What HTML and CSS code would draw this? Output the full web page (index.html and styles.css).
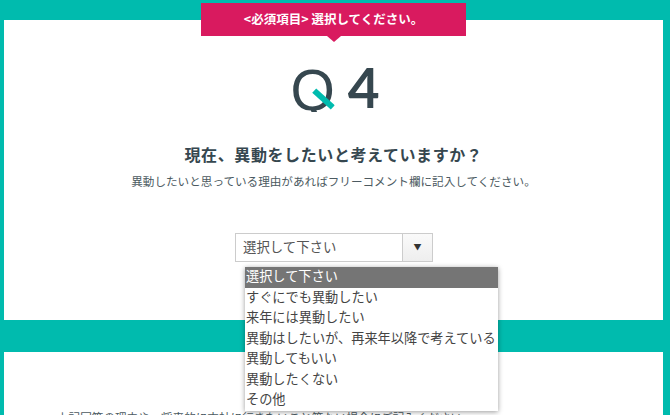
FILE: index.html
```html
<!DOCTYPE html>
<html lang="ja">
<head>
  <meta charset="UTF-8" />
  <meta name="viewport" content="width=device-width, initial-scale=1.0" />
  <title>Q4</title>
  <link rel="stylesheet" href="styles.css">
</head>
<body>
  <!-- Question card -->
  <section class="card question">
    <div class="notice">&lt;必須項目&gt; 選択してください。</div>

    <div class="number">
      <span class="number-q">Q<span class="number-tail"></span></span>
      <span class="number-n">4</span>
    </div>

    <h2 class="title">現在、異動をしたいと考えていますか？</h2>
    <p class="lead">異動したいと思っている理由があればフリーコメント欄に記入してください。</p>

    <!-- Select box with its open list -->
    <div class="select">
      <div class="select-box">
        <span class="select-value">選択して下さい</span>
        <span class="select-arrow">▼</span>
      </div>
      <ul class="select-list">
        <li class="selected">選択して下さい</li>
        <li>すぐにでも異動したい</li>
        <li>来年には異動したい</li>
        <li>異動はしたいが、再来年以降で考えている</li>
        <li>異動してもいい</li>
        <li>異動したくない</li>
        <li>その他</li>
      </ul>
    </div>
  </section>

  <!-- Free comment card -->
  <section class="card comment">
    <p class="comment-text">上記回答の理由や、将来的に本社に行きたいこと等ない場合にご記入ください</p>
  </section>
</body>
</html>
```

FILE: styles.css
```css
* {
  margin: 0;
  padding: 0;
  box-sizing: border-box;
}
body {
  font-family: "Noto Sans CJK JP", "Noto Sans", sans-serif;
  background-color: #00bbae;
  color: #36474f;
  height: 415px;
  padding: 20px 7px 0 4px;
  overflow: hidden;
}
.card {
  background-color: #fff;
  position: relative;
}
.question {
  height: 300px;
  padding-top: 41px;
  text-align: center;
}
/* Pink banner sticking out of the top of the card */
.notice {
  position: absolute;
  top: -17px;
  left: 197px;
  width: 265px;
  height: 33px;
  line-height: 32px;
  background-color: #d91a5f;
  color: #fff;
  font-size: 12.5px;
  font-weight: 700;
}
.notice::after {
  content: "";
  position: absolute;
  top: 33px;
  left: 126px;
  border-top: 6px solid #d91a5f;
  border-left: 7px solid transparent;
  border-right: 7px solid transparent;
}
/* Q4 mark */
.number {
  display: flex;
  justify-content: center;
  gap: 13px;
  height: 58px;
  padding-left: 3px;
  font-family: "Liberation Sans", sans-serif;
  font-size: 57px;
  line-height: 58px;
}
.number-q {
  position: relative;
  clip-path: inset(0 0 7px 0); /* cut the glyph's own tail, the teal bar replaces it */
}
.number-n {
  font-family: "Lato", sans-serif;
  font-weight: 700;
  font-size: 55px;
  line-height: 53px;
}
.number-tail {
  position: absolute;
  left: 21px;
  top: 35px;
  width: 25px;
  height: 6px;
  background-color: #00bbae;
  transform: rotate(42deg);
}
.title {
  margin-top: 23px;
  font-size: 16px;
  font-weight: 700;
  letter-spacing: 0.6px;
  line-height: 24px;
}
.lead {
  margin-top: 6px;
  font-size: 11.6px;
  line-height: 18px;
  color: #4c5a61;
}
/* Select box */
.select {
  position: relative;
  width: 198px;
  margin: 43px 0 0 231px;
  text-align: left;
}
.select-box {
  display: flex;
  height: 29px;
  border: 1px solid #ccc;
  background-color: #fff;
}
.select-value {
  flex: 1;
  padding-left: 7px;
  font-size: 13.4px;
  line-height: 25px;
  color: #555;
}
.select-arrow {
  width: 30px;
  border-left: 1px solid #ccc;
  background: linear-gradient(#fafafa, #eee);
  font-size: 8px;
  line-height: 25px;
  text-align: center;
  color: #333;
}
.select-list {
  position: absolute;
  top: 34px;
  left: 10px;
  width: 253px;
  height: 144px;
  list-style: none;
  background-color: #fff;
  box-shadow: 0 1px 5px rgba(0, 0, 0, 0.4);
  font-size: 13.2px;
  color: #444;
  z-index: 10;
}
.select-list li {
  height: 20.5px;
  line-height: 18px;
  padding-left: 1px;
  white-space: nowrap;
}
.select-list .selected {
  background-color: #757575;
  color: #fff;
}
/* Second card, cut off by the window */
.comment {
  margin-top: 32px;
  height: 120px;
  padding: 56px 0 0 53px;
}
.comment-text {
  font-size: 11.6px;
  line-height: 18px;
  color: #4c5a61;
}
```
